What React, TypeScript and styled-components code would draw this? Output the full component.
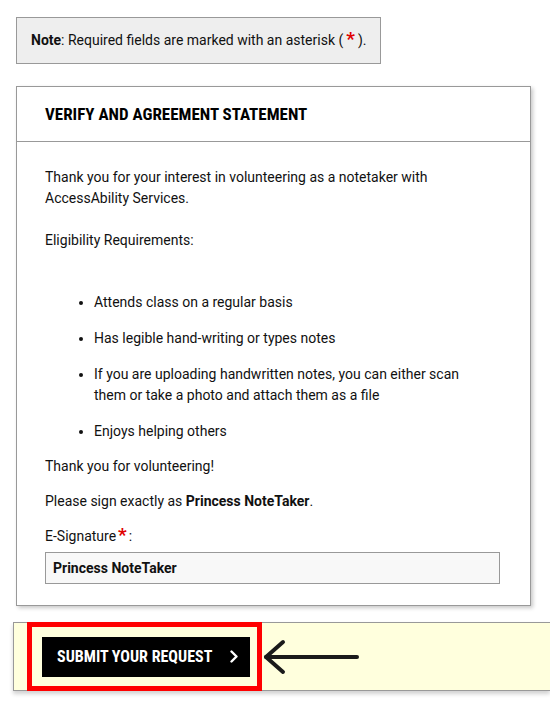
import React from 'react';
import styled, { createGlobalStyle } from 'styled-components';

const GlobalStyle = createGlobalStyle`
  html, body {
    margin: 0;
    padding: 0;
    background: #ffffff;
    overflow-x: hidden;
  }
  body {
    font-family: Roboto, "Liberation Sans", sans-serif;
    font-size: 14px;
    line-height: 21px;
    color: #111111;
  }
`;

const Page = styled.div`
  padding: 17px 19px 30px 16px;
`;

const NoteBox = styled.div`
  display: inline-block;
  padding: 12px 14px;
  background: #eeeeee;
  border: 1px solid #999999;
`;

const Asterisk = styled.span<{ $spaced?: boolean }>`
  color: #e00000;
  font-weight: 700;
  font-size: 19px;
  line-height: 0;
  margin: 0 ${p => (p.$spaced ? 3 : 2)}px;
`;

const Panel = styled.section`
  margin-top: 22px;
  border: 1px solid #999999;
  background: #ffffff;
  box-shadow: 2px 2px 4px rgba(0, 0, 0, 0.22);
`;

const PanelHeader = styled.div`
  padding: 17px 28px 16px 28px;
  border-bottom: 1px solid #999999;
`;

const Heading = styled.h2`
  margin: 0;
  font-size: 17px;
  line-height: 21px;
  font-weight: 700;
  font-stretch: 75%;
  text-transform: uppercase;
  color: #000000;
`;

const PanelBody = styled.div`
  padding: 25px 30px 21px 28px;
`;

const Para = styled.p<{ $gap?: number }>`
  margin: 0 0 ${p => p.$gap ?? 14}px;
`;

const List = styled.ul`
  margin: 41px 30px 14px 0;
  padding-left: 49px;
`;

const Item = styled.li`
  margin-bottom: 15px;
  &:last-child {
    margin-bottom: 0;
  }
`;

const Label = styled.label`
  display: block;
  margin-bottom: 5px;
`;

const SignatureInput = styled.input`
  box-sizing: border-box;
  display: block;
  width: 100%;
  height: 32px;
  padding: 0 7px;
  border: 1px solid #999999;
  background: #f8f8f8;
  font-family: Roboto, "Liberation Sans", sans-serif;
  font-size: 14px;
  font-weight: 700;
  color: #111111;
  outline: none;
`;

const SubmitBar = styled.div`
  display: flex;
  align-items: center;
  margin: 16px -19px 0 -3px;
  height: 67px;
  border: 1px solid #999999;
  border-right: none;
  background: #ffffdd;
  box-shadow: 0 3px 4px rgba(0, 0, 0, 0.18);
`;

const Highlight = styled.div`
  display: flex;
  align-items: center;
  box-sizing: border-box;
  height: 69px;
  margin: -1px 0 -1px 13px;
  padding: 0 7px 0 10px;
  border: 5px solid #ff0000;
`;

const SubmitButton = styled.button`
  display: flex;
  align-items: center;
  gap: 18px;
  height: 40px;
  padding: 0 12px 0 15px;
  border: none;
  background: #000000;
  color: #ffffff;
  font-family: Roboto, "Liberation Sans", sans-serif;
  font-size: 16px;
  font-weight: 700;
  font-stretch: 75%;
  text-transform: uppercase;
  cursor: pointer;
`;

const ArrowWrap = styled.div`
  display: flex;
  margin-left: 1px;
`;

const Chevron = () => (
  <svg width="8" height="13" viewBox="0 0 8 13" aria-hidden="true">
    <polyline points="1.5,1.5 6.5,6.5 1.5,11.5" fill="none" stroke="#ffffff" strokeWidth="2.4" strokeLinecap="round" strokeLinejoin="round" />
  </svg>
);

const LeftArrow = () => (
  <svg width="98" height="36" viewBox="0 0 98 36" aria-hidden="true">
    <g fill="none" stroke="#1a1a1a" strokeWidth="4" strokeLinecap="round" strokeLinejoin="round">
      <line x1="3" y1="18" x2="94" y2="18" />
      <polyline points="20,3 3,18 20,33" />
    </g>
  </svg>
);

export default function App() {
  return (
    <Page>
      <GlobalStyle />
      <NoteBox>
        <strong>Note</strong>: Required fields are marked with an asterisk (<Asterisk $spaced>*</Asterisk>).
      </NoteBox>

      <Panel>
        <PanelHeader>
          <Heading>Verify and Agreement Statement</Heading>
        </PanelHeader>
        <PanelBody>
          <Para $gap={21}>
            Thank you for your interest in volunteering as a notetaker with AccessAbility Services.
          </Para>
          <Para $gap={0}>Eligibility Requirements:</Para>
          <List>
            <Item>Attends class on a regular basis</Item>
            <Item>Has legible hand-writing or types notes</Item>
            <Item>
              If you are uploading handwritten notes, you can either scan them or take a photo and attach them as a file
            </Item>
            <Item>Enjoys helping others</Item>
          </List>
          <Para>Thank you for volunteering!</Para>
          <Para>
            Please sign exactly as <strong>Princess NoteTaker</strong>.
          </Para>
          <Label htmlFor="esig">
            E-Signature<Asterisk>*</Asterisk>:
          </Label>
          <SignatureInput id="esig" type="text" defaultValue="Princess NoteTaker" />
        </PanelBody>
      </Panel>

      <SubmitBar>
        <Highlight>
          <SubmitButton type="button">
            Submit your request
            <Chevron />
          </SubmitButton>
        </Highlight>
        <ArrowWrap>
          <LeftArrow />
        </ArrowWrap>
      </SubmitBar>
    </Page>
  );
}
